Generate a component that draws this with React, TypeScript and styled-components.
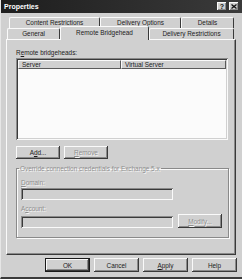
import React from 'react';
import styled, { createGlobalStyle, css } from 'styled-components';

const Global = createGlobalStyle`
  html, body { margin: 0; padding: 0; background: #d0d0d0; }
  body { font-family: "Liberation Sans", Arial, sans-serif; font-size: 6.4px; color: #1c1c1c; }
  * { box-sizing: border-box; }
`;

const raised = css`
  box-shadow: inset -1px -1px 0 #3a3a3a, inset 1px 1px 0 #fafafa, inset -2px -2px 0 #8a8a8a;
`;
const sunken = css`
  box-shadow: inset 1px 1px 0 #8a8a8a, inset -1px -1px 0 #fafafa, inset 2px 2px 0 #3a3a3a, inset -2px -2px 0 #d0d0d0;
`;

const Window = styled.div`
  width: 242px;
  height: 279px;
  background: #d0d0d0;
  display: flex;
  flex-direction: column;
  border-bottom: 2px solid #3a3a3a;
  border-left: 1px solid #e6e6e6;
`;

const TitleBar = styled.div`
  height: 13px;
  background: linear-gradient(90deg, #1e1e1e, #3a3a3a);
  display: flex;
  align-items: center;
  padding: 0 3px;
  gap: 2px;
`;

const Title = styled.div`
  flex: 1;
  color: #ffffff;
  font-weight: bold;
  font-size: 7px;
  line-height: 8px;
`;

const CapButton = styled.div`
  width: 10px;
  height: 9px;
  background: #d0d0d0;
  ${raised};
  display: flex;
  align-items: center;
  justify-content: center;
  font-weight: bold;
  font-size: 7px;
  line-height: 7px;
  color: #111;
`;

const Tabs = styled.div`
  margin-top: 4px;
  display: flex;
  flex-direction: column;
`;

const TabRow = styled.div<{ $indent: number }>`
  display: flex;
  height: 11px;
  padding-left: ${p => p.$indent}px;
`;

const Tab = styled.div<{ $w: number; $selected?: boolean }>`
  width: ${p => p.$w}px;
  height: 11px;
  background: #d0d0d0;
  border-top: 1px solid #fafafa;
  border-left: 1px solid #fafafa;
  border-right: 1px solid #3a3a3a;
  border-radius: 2px 2px 0 0;
  display: flex;
  align-items: center;
  justify-content: center;
  line-height: 8px;
  ${p => p.$selected && css`
    position: relative;
    z-index: 1;
    margin-top: -2px;
    height: 14px;
    padding-bottom: 2px;
  `}
`;

const Panel = styled.div`
  margin: 0 6px 0 5px;
  height: 216px;
  border-top: 1px solid #fafafa;
  border-left: 1px solid #fafafa;
  border-right: 1px solid #3a3a3a;
  border-bottom: 1px solid #3a3a3a;
  box-shadow: inset -1px -1px 0 #8a8a8a;
  padding: 9px 0 0 9px;
  display: flex;
  flex-direction: column;
`;

const Label = styled.div<{ $disabled?: boolean }>`
  line-height: 7px;
  height: 7px;
  ${p => p.$disabled && css`
    color: #8e8e8e;
    text-shadow: 1px 1px 0 #f4f4f4;
  `}
`;

const ListBox = styled.div`
  margin-top: 2px;
  width: 212px;
  height: 82px;
  background: #fbfbfb;
  ${sunken};
  padding: 2px;
  display: flex;
  flex-direction: column;
`;

const HeaderRow = styled.div`
  display: flex;
  height: 9px;
  background: #d0d0d0;
`;

const HeaderCell = styled.div<{ $w?: number }>`
  ${p => (p.$w ? `width: ${p.$w}px;` : 'flex: 1;')}
  height: 9px;
  padding-left: 3px;
  border-top: 1px solid #fafafa;
  border-left: 1px solid #fafafa;
  border-right: 1px solid #5a5a5a;
  border-bottom: 1px solid #5a5a5a;
  line-height: 7px;
`;

const ButtonRow = styled.div<{ $end?: boolean }>`
  display: flex;
  gap: 4px;
  ${p => p.$end && css`justify-content: flex-end; padding-right: 5px;`}
`;

const Button = styled.div<{ $w?: number; $h?: number; $disabled?: boolean; $default?: boolean }>`
  width: ${p => p.$w ?? 44}px;
  height: ${p => p.$h ?? 13}px;
  background: #d0d0d0;
  ${raised};
  display: flex;
  align-items: center;
  justify-content: center;
  line-height: 7px;
  ${p => p.$default && css`
    box-shadow: inset 0 0 0 1px #1a1a1a, inset -2px -2px 0 #3a3a3a, inset 2px 2px 0 #fafafa, inset -3px -3px 0 #8a8a8a;
  `}
  ${p => p.$disabled && css`
    color: #8e8e8e;
    text-shadow: 1px 1px 0 #f4f4f4;
  `}
`;

const Group = styled.fieldset`
  margin: 6px 0 0 0;
  padding: 0 6px 0 4px;
  width: 213px;
  height: 73px;
  min-width: 0;
  border: 1px solid #8a8a8a;
  box-shadow: 1px 1px 0 #fafafa, inset 1px 1px 0 #fafafa;
  display: flex;
  flex-direction: column;
`;

const Legend = styled.legend`
  padding: 0 1px;
  margin-left: -2px;
  line-height: 7px;
  color: #8e8e8e;
  text-shadow: 1px 1px 0 #f4f4f4;
`;

const Field = styled.div<{ $w: number }>`
  width: ${p => p.$w}px;
  height: 12px;
  background: #d0d0d0;
  ${sunken};
`;

const FieldRow = styled.div`
  display: flex;
  align-items: flex-end;
  justify-content: space-between;
`;

const Stack = styled.div<{ $top: number }>`
  margin-top: ${p => p.$top}px;
  display: flex;
  flex-direction: column;
  gap: 2px;
`;

const Spacer = styled.div<{ $h: number }>`
  height: ${p => p.$h}px;
  flex: none;
`;

export default function App() {
  return (
    <>
      <Global />
      <Window>
        <TitleBar>
          <Title>Properties</Title>
          <CapButton>?</CapButton>
          <CapButton>
            <svg width="6" height="5" viewBox="0 0 6 5">
              <path d="M0.5 0.5 L5.5 4.5 M5.5 0.5 L0.5 4.5" stroke="#111" strokeWidth="1.3" />
            </svg>
          </CapButton>
        </TitleBar>
        <Tabs>
          <TabRow $indent={8}>
            <Tab $w={91}>Content Restrictions</Tab>
            <Tab $w={81}>Delivery Options</Tab>
            <Tab $w={53}>Details</Tab>
          </TabRow>
          <TabRow $indent={6}>
            <Tab $w={53}>General</Tab>
            <Tab $w={89} $selected>Remote Bridgehead</Tab>
            <Tab $w={85}>Delivery Restrictions</Tab>
          </TabRow>
        </Tabs>
        <Panel>
          <Label>R<u>e</u>mote bridgeheads:</Label>
          <ListBox>
            <HeaderRow>
              <HeaderCell $w={103}>Server</HeaderCell>
              <HeaderCell>Virtual Server</HeaderCell>
            </HeaderRow>
          </ListBox>
          <Spacer $h={6} />
          <ButtonRow>
            <Button>A<u>d</u>d...</Button>
            <Button $disabled><u>R</u>emove</Button>
          </ButtonRow>
          <Group>
            <Legend>Override connection credentials for Exchange 5.x</Legend>
            <Stack $top={7}>
              <Label $disabled><u>D</u>omain:</Label>
              <Field $w={152} />
            </Stack>
            <Stack $top={5}>
              <Label $disabled>A<u>c</u>count:</Label>
              <FieldRow>
                <Field $w={152} />
                <Button $w={44} $h={14} $disabled><u>M</u>odify...</Button>
              </FieldRow>
            </Stack>
          </Group>
        </Panel>
        <Spacer $h={3} />
        <ButtonRow $end>
          <Button $w={45} $h={14} $default>OK</Button>
          <Button $w={45} $h={14}>Cancel</Button>
          <Button $w={45} $h={14}><u>A</u>pply</Button>
          <Button $w={45} $h={14}>Help</Button>
        </ButtonRow>
      </Window>
    </>
  );
}
